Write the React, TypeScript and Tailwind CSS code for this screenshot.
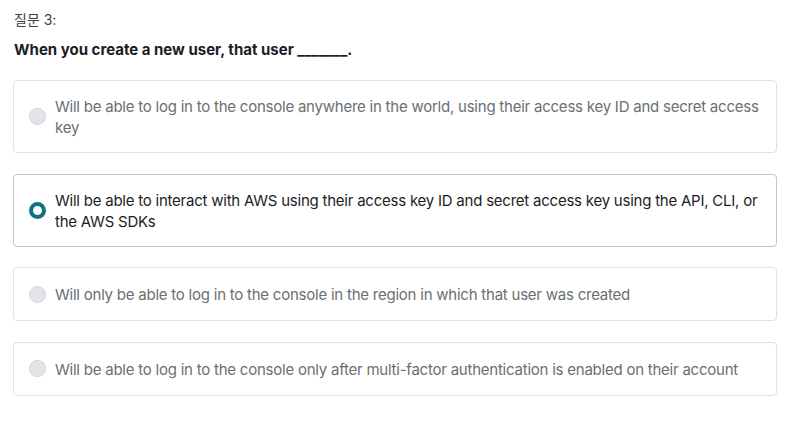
import React from 'react';

type Answer = {
  text: string;
  selected?: boolean;
};

const answers: Answer[] = [
  {
    text: 'Will be able to log in to the console anywhere in the world, using their access key ID and secret access key',
  },
  {
    text: 'Will be able to interact with AWS using their access key ID and secret access key using the API, CLI, or the AWS SDKs',
    selected: true,
  },
  {
    text: 'Will only be able to log in to the console in the region in which that user was created',
  },
  {
    text: 'Will be able to log in to the console only after multi-factor authentication is enabled on their account',
  },
];

const Radio = ({ selected }: { selected?: boolean }) =>
  selected ? (
    <span className="block h-[17px] w-[17px] shrink-0 rounded-full border-[4.5px] border-[#0f7282] bg-white" />
  ) : (
    <span className="block h-[17px] w-[17px] shrink-0 rounded-full border border-[#d1d2e0] bg-[#e3e4e7]" />
  );

export default function App() {
  return (
    <div className="min-h-[423px] bg-white pl-[13px] pt-[10px] font-['Inter','Noto_Sans_CJK_KR',sans-serif]">
      <div className="pl-[1px] text-[14px] leading-[20px] text-[#3e4143]">질문 3:</div>
      <div className="mt-[10px] pl-[1px] text-[15px] font-bold leading-[20px] text-[#1c1d1f]">
        When you create a new user, that user _______.
      </div>
      <div className="mt-[20px] flex w-[764px] flex-col gap-[20.5px]">
        {answers.map((a, i) => (
          <label
            key={i}
            className={`flex min-h-[54px] items-center gap-[9px] rounded-[4px] border bg-white py-[14px] pl-[15px] pr-[14px] ${
              a.selected ? 'border-[#c4c5c7]' : 'border-[#e0e1e3]'
            }`}
          >
            <Radio selected={a.selected} />
            <span
              className={`pt-[1px] text-[15px] leading-[21px] tracking-[-0.23px] ${
                a.selected ? 'text-[#1c1d1f]' : 'text-[#6a6f73]'
              }`}
            >
              {a.text}
            </span>
          </label>
        ))}
      </div>
    </div>
  );
}
